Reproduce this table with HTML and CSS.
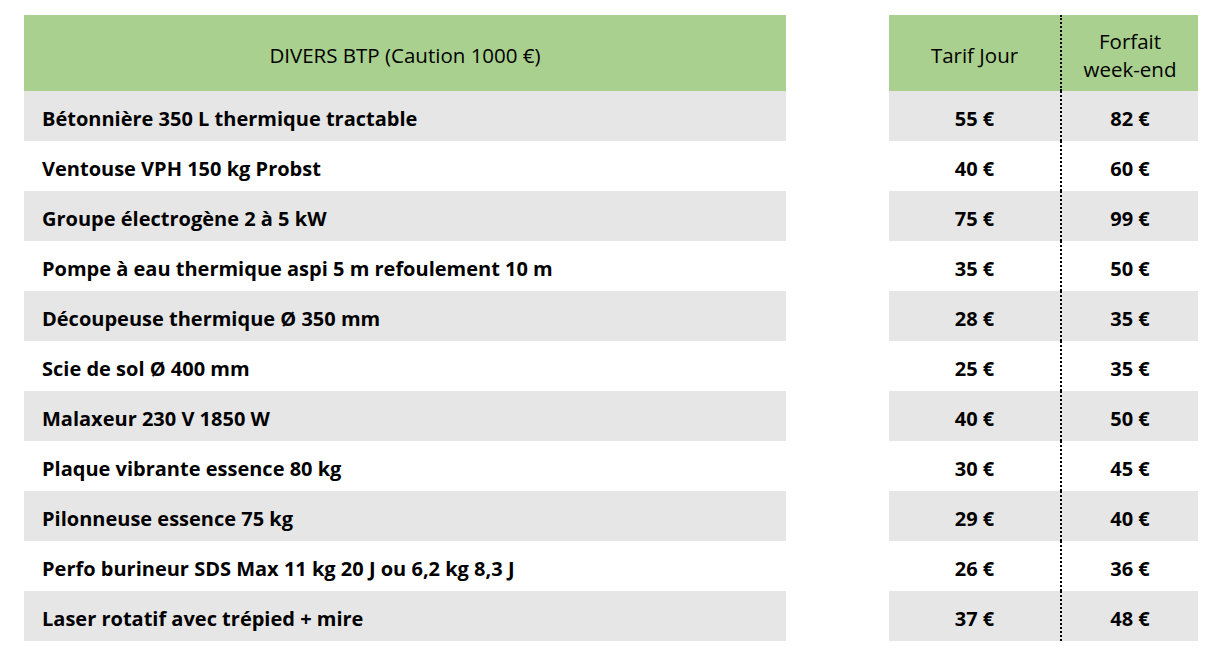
FILE: index.html
```html
<!DOCTYPE html>
<html lang="fr">
<head>
<meta charset="utf-8">
<title>Divers BTP</title>
<link rel="stylesheet" href="styles.css">
</head>
<body>
<div class="page">
  <table class="tbl tbl-main">
    <thead>
      <tr><th>DIVERS BTP (Caution 1000 €)</th></tr>
    </thead>
    <tbody>
      <tr class="alt"><td>Bétonnière 350 L thermique tractable</td></tr>
      <tr><td>Ventouse VPH 150 kg Probst</td></tr>
      <tr class="alt"><td>Groupe électrogène 2 à 5 kW</td></tr>
      <tr><td>Pompe à eau thermique aspi 5 m refoulement 10 m</td></tr>
      <tr class="alt"><td>Découpeuse thermique Ø 350 mm</td></tr>
      <tr><td>Scie de sol Ø 400 mm</td></tr>
      <tr class="alt"><td>Malaxeur 230 V 1850 W</td></tr>
      <tr><td>Plaque vibrante essence 80 kg</td></tr>
      <tr class="alt"><td>Pilonneuse essence 75 kg</td></tr>
      <tr><td>Perfo burineur SDS Max 11 kg 20 J ou 6,2 kg 8,3 J</td></tr>
      <tr class="alt"><td>Laser rotatif avec trépied + mire</td></tr>
    </tbody>
  </table>
  <table class="tbl tbl-price">
    <thead>
      <tr><th class="c1">Tarif Jour</th><th class="c2">Forfait<br>week-end</th></tr>
    </thead>
    <tbody>
      <tr class="alt"><td class="c1">55 €</td><td class="c2">82 €</td></tr>
      <tr><td class="c1">40 €</td><td class="c2">60 €</td></tr>
      <tr class="alt"><td class="c1">75 €</td><td class="c2">99 €</td></tr>
      <tr><td class="c1">35 €</td><td class="c2">50 €</td></tr>
      <tr class="alt"><td class="c1">28 €</td><td class="c2">35 €</td></tr>
      <tr><td class="c1">25 €</td><td class="c2">35 €</td></tr>
      <tr class="alt"><td class="c1">40 €</td><td class="c2">50 €</td></tr>
      <tr><td class="c1">30 €</td><td class="c2">45 €</td></tr>
      <tr class="alt"><td class="c1">29 €</td><td class="c2">40 €</td></tr>
      <tr><td class="c1">26 €</td><td class="c2">36 €</td></tr>
      <tr class="alt"><td class="c1">37 €</td><td class="c2">48 €</td></tr>
    </tbody>
  </table>
</div>
</body>
</html>
```
FILE: styles.css
```css
html, body {
  margin: 0;
  padding: 0;
  background: #ffffff;
}
.page {
  display: flex;
  align-items: flex-start;
  padding: 15px 0 0 24px;
  gap: 103px;
  font-family: "Open Sans", "Lato", sans-serif;
  color: #000;
}
.tbl {
  border-collapse: collapse;
  border-spacing: 0;
  table-layout: fixed;
}
.tbl th {
  background: #a9d08e;
  height: 72px;
  padding: 4px 0 0 0;
  font-weight: 500;
  font-size: 20.5px;
  line-height: 28px;
  text-align: center;
  vertical-align: middle;
}
.tbl td {
  height: 45px;
  padding: 5px 0 0 0;
  font-weight: 700;
  font-size: 20px;
  line-height: 24px;
  vertical-align: middle;
}
.tbl tr.alt td {
  background: #e7e6e6;
}
.tbl-main {
  width: 762px;
}
.tbl-main td {
  padding-left: 18px;
  text-align: left;
}
.tbl-price {
  width: 309px;
}
.tbl-price .c1 {
  width: 171px;
  text-align: center;
  border-right: 2px dotted #000;
}
.tbl-price .c2 {
  width: 136px;
  text-align: center;
}
```
